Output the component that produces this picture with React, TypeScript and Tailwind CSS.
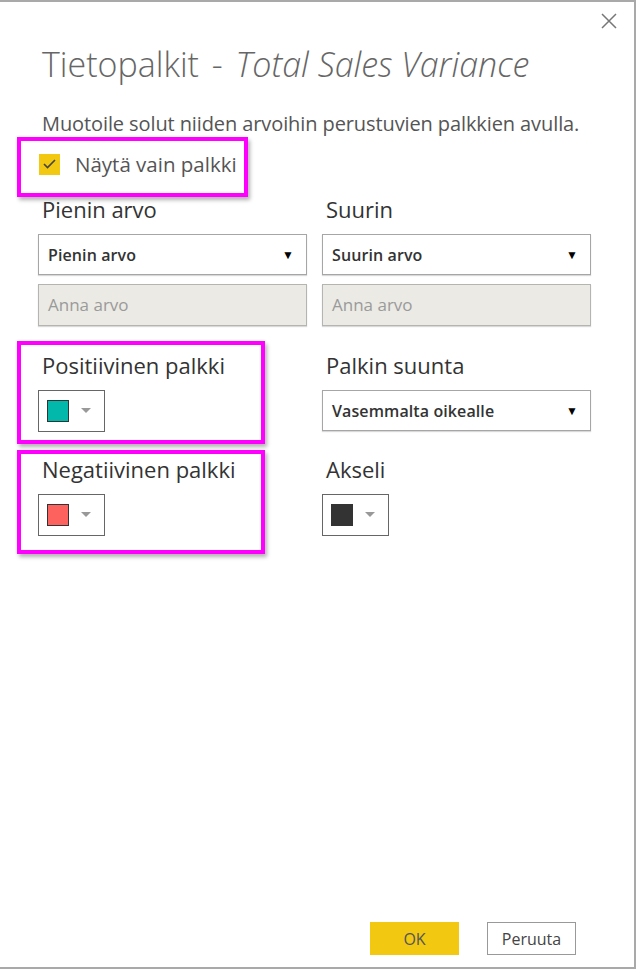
import React from "react";

const font = { fontFamily: '"Open Sans", "Noto Sans", sans-serif' };

const Select = ({ value }: { value: string }) => (
  <div className="flex h-[41px] items-center justify-between border border-[#a6a6a6] bg-white pl-[9px] pr-[12px] shadow-[0_1px_1px_rgba(0,0,0,0.15)]">
    <span className="text-[16px] font-semibold tracking-[0.1px] text-[#333]">{value}</span>
    <span className="text-[12px] text-black">▼</span>
  </div>
);

const Input = () => (
  <div className="flex h-[42px] items-center border border-[#b4b4b0] bg-[#ebeae4] pl-[9px] shadow-[0_1px_1px_rgba(0,0,0,0.15)]">
    <span className="text-[17px] text-[#9a9a9a]">Anna arvo</span>
  </div>
);

const Swatch = ({ color }: { color: string }) => (
  <div className="flex h-[42px] w-[67px] items-center border border-[#666] bg-white pl-[8px]">
    <div className="h-[22px] w-[22px] border border-[#333]" style={{ backgroundColor: color }} />
    <svg width="10" height="6" viewBox="0 0 10 6" className="ml-[12px]">
      <path d="M0 0 L10 0 L5 5 Z" fill="#999" />
    </svg>
  </div>
);

const Label = ({ children }: { children: React.ReactNode }) => (
  <p className="pl-1 text-[22px] leading-[26px] text-[#333]">{children}</p>
);

export default function App() {
  return (
    <div className="h-[970px] w-[639px] bg-white" style={font}>
      <div className="relative flex h-[969px] w-[636px] flex-col border-t-2 border-r-2 border-b-2 border-[#a9a9a9] bg-white">
        {/* close */}
        <svg width="16" height="16" viewBox="0 0 16 16" className="absolute right-[17px] top-[11px]">
          <path d="M1 1 L15 15 M15 1 L1 15" stroke="#777" strokeWidth="1.5" />
        </svg>

        <div className="px-[38px]">
          <h1 className="mt-[40px] pl-1 text-[34px] font-light leading-[44px] text-[#666]">
            Tietopalkit <span className="mx-[4px]">-</span> <i>Total Sales Variance</i>
          </h1>
          <p className="mt-[26px] pl-1 text-[20px] leading-[24px] tracking-[-0.1px] text-[#555]">
            Muotoile solut niiden arvoihin perustuvien palkkien avulla.
          </p>

          {/* checkbox */}
          <div className="mt-[16px] flex items-center gap-[15px] pl-[1px]">
            <div className="flex h-[21px] w-[21px] items-center justify-center bg-[#f2c811]">
              <svg width="13" height="10" viewBox="0 0 13 10">
                <path d="M1 5 L4.5 8.5 L12 1" stroke="#444" strokeWidth="1.6" fill="none" />
              </svg>
            </div>
            <span className="text-[20.5px] leading-[24px] text-[#555]">Näytä vain palkki</span>
          </div>

          <div className="mt-[20px] grid w-[553px] grid-cols-2 gap-x-[15px]">
            <div>
              <Label>Pienin arvo</Label>
              <div className="mt-[12px]">
                <Select value="Pienin arvo" />
              </div>
              <div className="mt-[9px]">
                <Input />
              </div>
            </div>
            <div>
              <Label>Suurin</Label>
              <div className="mt-[12px]">
                <Select value="Suurin arvo" />
              </div>
              <div className="mt-[9px]">
                <Input />
              </div>
            </div>

            <div className="mt-[26px]">
              <Label>Positiivinen palkki</Label>
              <div className="mt-[12px]">
                <Swatch color="#01b8aa" />
              </div>
            </div>
            <div className="mt-[26px]">
              <Label>Palkin suunta</Label>
              <div className="mt-[12px]">
                <Select value="Vasemmalta oikealle" />
              </div>
            </div>

            <div className="mt-[24px]">
              <Label>Negatiivinen palkki</Label>
              <div className="mt-[12px]">
                <Swatch color="#fd625e" />
              </div>
            </div>
            <div className="mt-[24px]">
              <Label>Akseli</Label>
              <div className="mt-[12px]">
                <Swatch color="#333333" />
              </div>
            </div>
          </div>
        </div>

        {/* highlight annotations */}
        <div className="absolute left-[17px] top-[135px] h-[60px] w-[231px] border-[4px] border-[#ff00ff] shadow-[2px_3px_4px_rgba(0,0,0,0.3)]" />
        <div className="absolute left-[17px] top-[339px] h-[103px] w-[248px] border-[4px] border-[#ff00ff] shadow-[2px_3px_4px_rgba(0,0,0,0.3)]" />
        <div className="absolute left-[17px] top-[448px] h-[104px] w-[248px] border-[4px] border-[#ff00ff] shadow-[2px_3px_4px_rgba(0,0,0,0.3)]" />

        <div className="mt-auto mb-[12px] flex justify-end gap-[28px] pr-[58px]">
          <button className="h-[33px] w-[89px] bg-[#f2c811] text-[16px] text-[#555]">OK</button>
          <button className="h-[33px] w-[89px] border border-[#999] bg-white text-[16px] text-[#444]">Peruuta</button>
        </div>
      </div>
    </div>
  );
}
